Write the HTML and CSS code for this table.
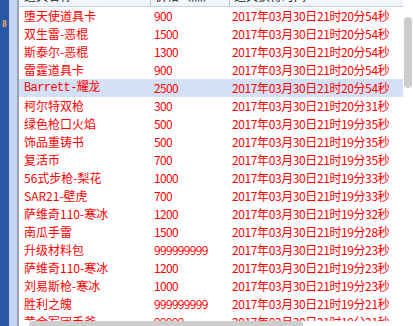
FILE: index.html
```html
<!DOCTYPE html>
<html>
<head>
<meta charset="utf-8">
<link rel="stylesheet" href="styles.css">
</head>
<body>
<div class="frame">
  <div class="strip"><span class="badge">8</span></div>
  <div class="gutter"></div>
  <div class="main">
    <div class="table">
      <div class="head">
        <div class="c1">道具名称</div>
        <div class="c2">价格（点）</div>
        <div class="c3">道具获得时间</div>
      </div>
      <div class="row"><div class="c1">堕天使道具卡</div><div class="c2">900</div><div class="c3">2017年03月30日21时20分54秒</div></div>
      <div class="row"><div class="c1">双生雷-恶棍</div><div class="c2">1500</div><div class="c3">2017年03月30日21时20分54秒</div></div>
      <div class="row"><div class="c1">斯泰尔-恶棍</div><div class="c2">1300</div><div class="c3">2017年03月30日21时20分54秒</div></div>
      <div class="row"><div class="c1">雷霆道具卡</div><div class="c2">900</div><div class="c3">2017年03月30日21时20分54秒</div></div>
      <div class="row selected"><div class="c1 mono">Barrett-耀龙</div><div class="c2">2500</div><div class="c3">2017年03月30日21时20分54秒</div></div>
      <div class="row"><div class="c1">柯尔特双枪</div><div class="c2">300</div><div class="c3">2017年03月30日21时20分31秒</div></div>
      <div class="row"><div class="c1">绿色枪口火焰</div><div class="c2">500</div><div class="c3">2017年03月30日21时19分35秒</div></div>
      <div class="row"><div class="c1">饰品重铸书</div><div class="c2">500</div><div class="c3">2017年03月30日21时19分35秒</div></div>
      <div class="row"><div class="c1">复活币</div><div class="c2">700</div><div class="c3">2017年03月30日21时19分35秒</div></div>
      <div class="row"><div class="c1">56式步枪-梨花</div><div class="c2">1000</div><div class="c3">2017年03月30日21时19分33秒</div></div>
      <div class="row"><div class="c1">SAR21-壁虎</div><div class="c2">700</div><div class="c3">2017年03月30日21时19分33秒</div></div>
      <div class="row"><div class="c1">萨维奇110-寒冰</div><div class="c2">1200</div><div class="c3">2017年03月30日21时19分32秒</div></div>
      <div class="row"><div class="c1">南瓜手雷</div><div class="c2">1500</div><div class="c3">2017年03月30日21时19分28秒</div></div>
      <div class="row"><div class="c1">升级材料包</div><div class="c2">999999999</div><div class="c3">2017年03月30日21时19分23秒</div></div>
      <div class="row"><div class="c1">萨维奇110-寒冰</div><div class="c2">1200</div><div class="c3">2017年03月30日21时19分23秒</div></div>
      <div class="row"><div class="c1">刘易斯枪-寒冰</div><div class="c2">1000</div><div class="c3">2017年03月30日21时19分23秒</div></div>
      <div class="row"><div class="c1">胜利之魄</div><div class="c2">999999999</div><div class="c3">2017年03月30日21时19分21秒</div></div>
      <div class="row"><div class="c1">黄金军团手斧</div><div class="c2">99999</div><div class="c3">2017年03月30日21时19分21秒</div></div>
    </div>
    <div class="vscroll"><div class="vthumb"></div></div>
    <div class="hscroll"><div class="hthumb"></div></div>
  </div>
</div>
</body>
</html>
```
FILE: styles.css
```css
html, body {
  margin: 0;
  padding: 0;
  width: 413px;
  height: 326px;
  overflow: hidden;
  background: #ffffff;
}
.frame {
  display: flex;
  width: 413px;
  height: 326px;
  font-family: "Noto Sans CJK SC", "Liberation Sans", sans-serif;
  font-size: 12px;
}
.strip {
  width: 9px;
  background: #2a56a6;
  position: relative;
  flex: none;
}
.badge {
  position: absolute;
  left: 2px;
  top: 21px;
  font-family: "DejaVu Sans Mono", monospace;
  font-size: 8px;
  font-weight: bold;
  line-height: 8px;
  color: #f0b050;
}
.gutter {
  width: 8px;
  background: #c3d5f3;
  border-right: 2px solid #9aa3b3;
  flex: none;
}
.main {
  position: relative;
  flex: 1;
  overflow: hidden;
}
.table {
  margin-top: -12px;
  width: 384px;
}
.head {
  display: flex;
  height: 18px;
  line-height: 16px;
  background: linear-gradient(#ffffff, #eef2f8);
  border-bottom: 1px solid #c8d3e4;
  color: #222;
}
.head .c1, .head .c2 {
  border-right: 1px solid #b8c4d6;
}
.row {
  display: flex;
  height: 18px;
  line-height: 18px;
  color: #ff0000;
  white-space: nowrap;
}
.row.selected {
  background: #d4e0f3;
}
.c1 {
  width: 126px;
  padding-left: 5px;
  flex: none;
}
.c2 {
  width: 74px;
  padding-left: 4px;
  flex: none;
  letter-spacing: -0.7px;
}
.c3 {
  padding-left: 4px;
  flex: none;
  letter-spacing: -0.4px;
}
.head .c2, .head .c3 {
  letter-spacing: 0;
}
.mono {
  font-family: "Liberation Mono", "Noto Sans CJK SC", monospace;
  letter-spacing: -0.6px;
}
.vscroll {
  position: absolute;
  right: 0;
  top: 0;
  width: 10px;
  height: 100%;
  background: #ffffff;
}
.vthumb {
  margin: 17px 1px 0 1px;
  height: 71px;
  border-radius: 4px;
  background: #cdcdcd;
}
.hscroll {
  position: absolute;
  left: 0;
  bottom: 0;
  width: 100%;
  height: 5px;
  background: #ffffff;
}
.hthumb {
  margin-left: 10px;
  width: 274px;
  height: 8px;
  border-radius: 4px;
  background: #cdcdcd;
}
```
